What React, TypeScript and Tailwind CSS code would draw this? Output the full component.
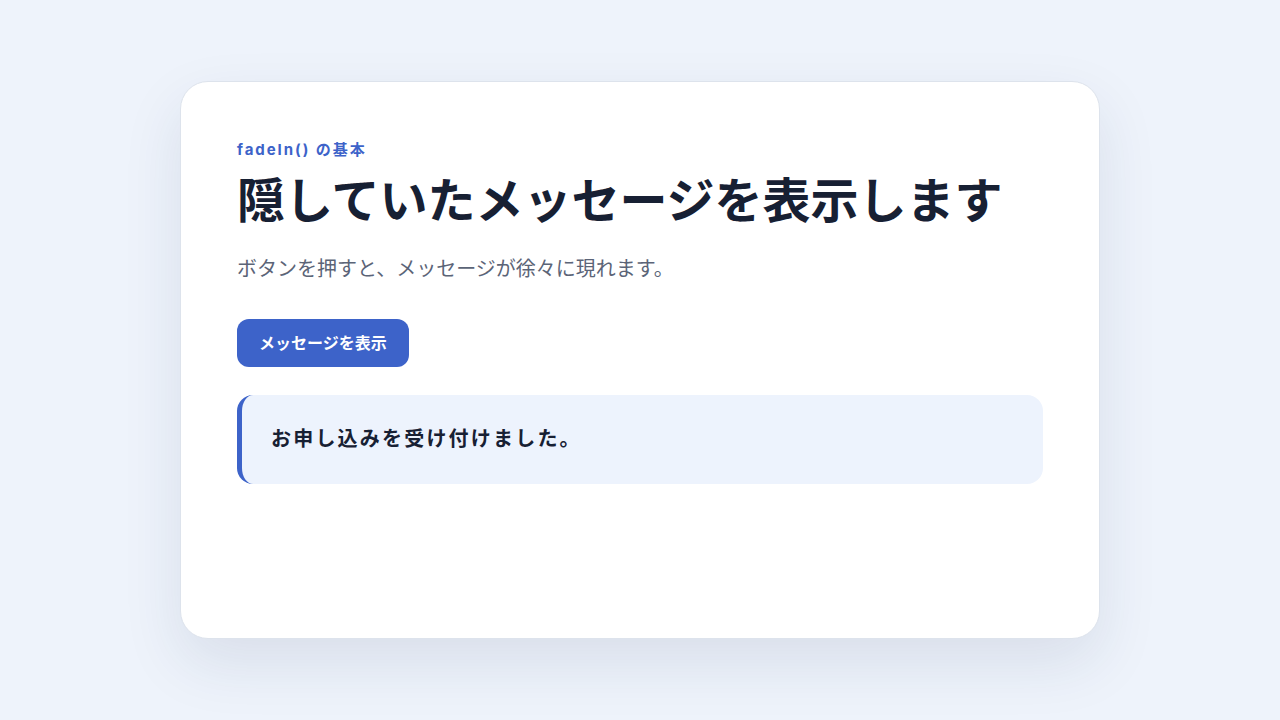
export default function App() {
  return (
    <div
      className="flex min-h-[720px] w-full items-center justify-center bg-[#eef3fb]"
      style={{ fontFamily: 'Inter, "Noto Sans CJK JP", sans-serif' }}
    >
      <div className="h-[558px] w-[920px] rounded-[28px] border border-[#dde3ec] bg-white px-[56px] pt-[58px] shadow-[0_24px_60px_rgba(30,50,90,0.10)]">
        <p className="text-[15px] font-bold leading-5 tracking-[0.13em] text-[#3d63c9]">
          fadeIn() の基本
        </p>
        <h1 className="mt-[12px] text-[48px] font-bold leading-[1.2] text-[#172033]">
          隠していたメッセージを表示します
        </h1>
        <p className="mt-[25px] text-[20px] leading-7 text-[#5b6477]">
          ボタンを押すと、メッセージが徐々に現れます。
        </p>
        <button className="mt-[36px] h-12 rounded-xl bg-[#3d63c9] px-[22px] text-[16px] font-bold text-white">
          メッセージを表示
        </button>
        <div className="mt-7 flex h-[89px] items-center rounded-2xl border-l-[5px] border-[#3d63c9] bg-[#edf3fd] pl-[29px]">
          <p className="text-[20px] font-bold tracking-[0.11em] text-[#172033]">
            お申し込みを受け付けました。
          </p>
        </div>
      </div>
    </div>
  );
}
